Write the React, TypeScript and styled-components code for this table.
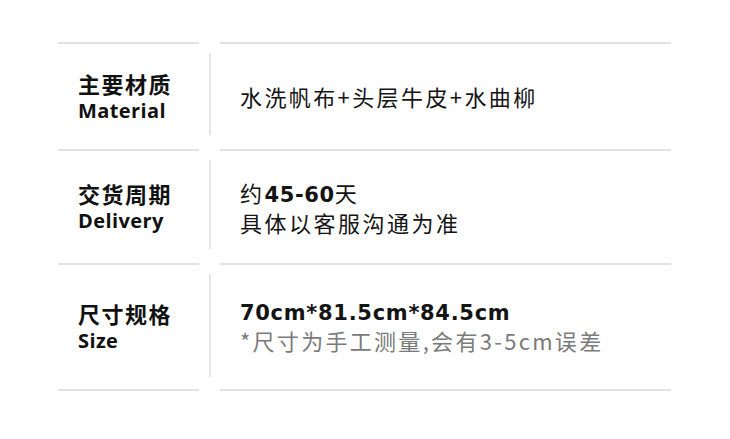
import styled, { createGlobalStyle } from 'styled-components'

const GlobalStyle = createGlobalStyle`
  html, body {
    margin: 0;
    padding: 0;
    background: #ffffff;
  }
  body {
    font-family: "Open Sans", "Noto Sans CJK SC", sans-serif;
    color: #141414;
  }
`

const Page = styled.div`
  width: 730px;
  height: 439px;
  padding: 42px 0 0 58px;
  box-sizing: border-box;
  background: #ffffff;
`

const Row = styled.div<{ height: number }>`
  display: grid;
  grid-template-columns: 141px 21px 451px;
  height: ${props => props.height}px;

  &:last-child {
    height: ${props => props.height + 2}px;
  }
`

const Cell = styled.div`
  border-top: 2px solid #e2e2e2;
  display: flex;
  flex-direction: column;
  justify-content: center;
  padding-left: 20px;

  ${Row}:last-child & {
    border-bottom: 2px solid #e2e2e2;
  }
`

const Divider = styled.div`
  display: flex;
  justify-content: center;
  padding: 11px 0 14px;

  &::before {
    content: '';
    width: 2px;
    background: #e6e6e6;
  }
`

const LabelCn = styled.div`
  font-family: "Noto Sans CJK SC", sans-serif;
  font-weight: 700;
  font-size: 22px;
  letter-spacing: 1.5px;
  line-height: 28px;
  color: #111;
`

const LabelEn = styled.div`
  font-family: "Open Sans", sans-serif;
  font-weight: 700;
  font-size: 20px;
  letter-spacing: 0.4px;
  line-height: 28px;
  color: #111;
`

const Value = styled.div<{ spacing?: number }>`
  font-family: "Noto Sans CJK SC", sans-serif;
  font-size: 22px;
  line-height: 27px;
  letter-spacing: ${props => props.spacing ?? 2.5}px;
  color: #141414;
`

const Strong = styled.span`
  font-family: "DejaVu Sans", sans-serif;
  font-weight: 700;
  font-size: 21px;
  letter-spacing: 0.6px;
`

const Measure = styled.div`
  font-family: "DejaVu Sans", sans-serif;
  font-weight: 700;
  font-size: 21px;
  line-height: 27px;
  letter-spacing: 0.7px;
  color: #141414;
`

const Note = styled(Value)`
  color: #7a7a7a;
  letter-spacing: 2.3px;
`

type SpecRow = {
  cn: string
  en: string
  height: number
  value: JSX.Element
}

const rows: SpecRow[] = [
  {
    cn: '主要材质',
    en: 'Material',
    height: 107,
    value: <Value spacing={2.4}>水洗帆布+头层牛皮+水曲柳</Value>,
  },
  {
    cn: '交货周期',
    en: 'Delivery',
    height: 114,
    value: (
      <>
        <Value>
          约<Strong>45-60</Strong>天
        </Value>
        <Value>具体以客服沟通为准</Value>
      </>
    ),
  },
  {
    cn: '尺寸规格',
    en: 'Size',
    height: 126,
    value: (
      <>
        <Measure>70cm*81.5cm*84.5cm</Measure>
        <Note>*尺寸为手工测量,会有3-5cm误差</Note>
      </>
    ),
  },
]

const App = (): JSX.Element => {
  return (
    <>
      <GlobalStyle />
      <Page>
        {rows.map(row => (
          <Row key={row.en} height={row.height}>
            <Cell>
              <LabelCn>{row.cn}</LabelCn>
              <LabelEn>{row.en}</LabelEn>
            </Cell>
            <Divider />
            <Cell>{row.value}</Cell>
          </Row>
        ))}
      </Page>
    </>
  )
}

export default App
